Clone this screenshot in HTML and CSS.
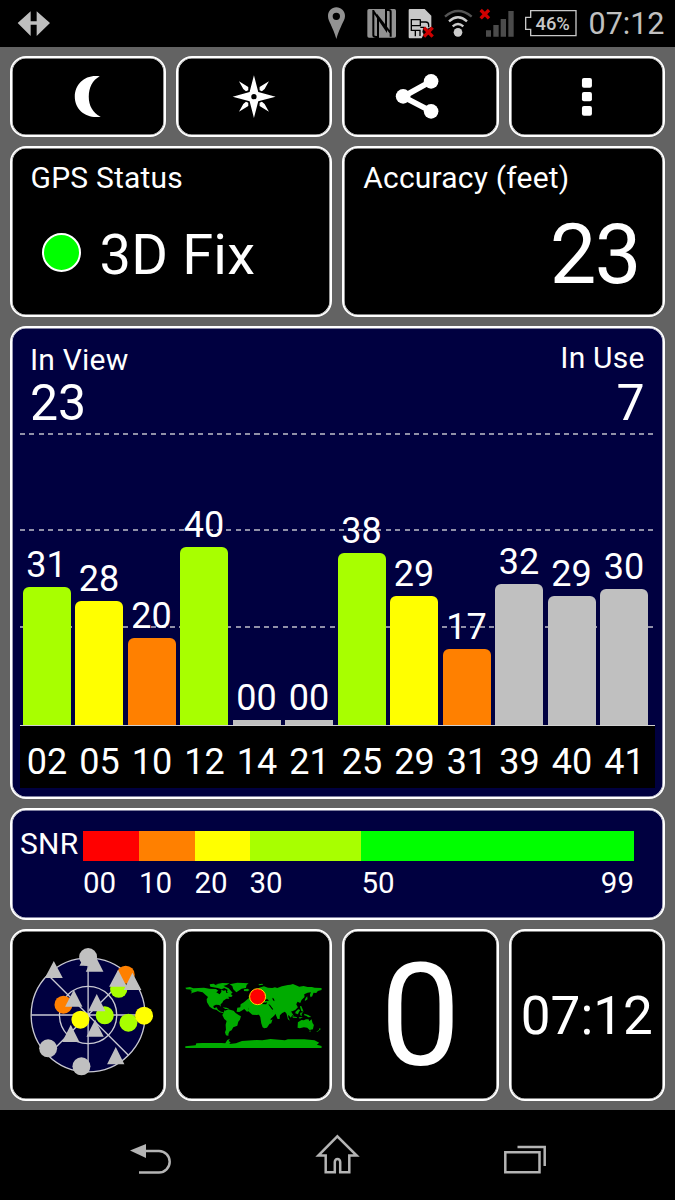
FILE: index.html
```html
<!DOCTYPE html>
<html lang="en">
<head>
<meta charset="utf-8">
<title>GPS Test</title>
<link rel="stylesheet" href="styles.css">
</head>
<body>
<header class="statusbar">
  <svg class="usb" viewBox="45 0 120 141"><path d="M53 69 92 34v30h18V34l40 35-40 39V74H92v34z"/></svg>
  <div class="tray">
    <svg class="pin" viewBox="0 0 120 141"><path fill="#929292" fill-rule="evenodd" d="M49 22c-14 0-25 11-25 26 0 9 4 17 8 25 6 14 12 26 17 44 5-18 11-30 17-44 4-8 9-16 9-25 0-15-12-26-26-26zm0 16a11 11 0 1 1 0 22 11 11 0 0 1 0-22z"/></svg>
    <svg class="nfc" viewBox="120 0 126 141"><rect x="142" y="27" width="86" height="86" rx="5" fill="#929292"/><path fill="none" stroke="#000" stroke-width="6" d="M160 30v76q0 5 9 5h5V50l37 48M160 33l38 56V30h8q6 0 6 5v75"/></svg>
    <svg class="sim" viewBox="246 0 111 141"><path fill="#c8c8c8" d="M269 27h45l20 20v34l-12 5-12-4-3 14 4 7-6 12h-36q-3 0-3-4V31q0-4 3-4z"/><path class="simlines" d="M302 59h-28v18h27V59M274 77v14h26v17M286 91v18M301 66h16q9 0 9 9v7M301 82h13"/><path class="cross" d="m312 83 26 27m0-27-26 27"/></svg>
    <svg class="wifi" viewBox="357 0 108 141"><circle cx="414" cy="97" r="13" fill="#ccc"/><g fill="none" stroke-width="7"><path stroke="#ccc" d="M398 79q16-14 32 0M387 64q27-24 54 0"/><path stroke="#555" d="M375 50q39-34 80 0"/></g></svg>
    <svg class="signal" viewBox="465 0 135 141"><path fill="#4b4b4b" d="M498 91h15v19h-15zM520 75h16v35h-16zM542 57h16v53h-16zM565 33h16v77h-16z"/><path class="cross" d="m482 30 25 25m0-25-25 25"/></svg>
    <svg class="battery" viewBox="600 0 189 141"><path fill="none" stroke="#c8c8c8" stroke-width="4" d="M632 32h136v75H632V88h-15V52h15z"/><text x="698" y="89" text-anchor="middle">46%</text></svg>
    <span class="clock">07:12</span>
  </div>
</header>

<main class="dash">
  <button class="card"><svg viewBox="37.5 177 451.5 225"><path d="M298 229c-43-7-75 23-75 61 0 40 36 67 78 60-24-11-36-34-36-60 0-27 11-49 33-61z"/></svg></button>
  <button class="card"><svg viewBox="537 177 451.5 225"><path fill-rule="evenodd" d="m762 226 13 50 52 14-52 14-13 50-13-50-51-14 51-14zm0 56a8 8 0 1 0 0 16 8 8 0 0 0 0-16zM717 244l28 17 0 10-7 3-8-7zM807 244l-28 17 0 10 7 3 8-7zM717 335l28-17 0-10-7-3-8 7zM807 335l-28-17 0-10 7-3 8 7z"/></svg></button>
  <button class="card"><svg viewBox="76.5 177 451.5 225"><path fill="none" stroke="#fff" stroke-width="17" d="m335 244-84 46 84 44"/><circle cx="335" cy="244" r="22"/><circle cx="251" cy="289" r="22"/><circle cx="335" cy="334" r="22"/></svg></button>
  <button class="card"><svg viewBox="576 177 451.5 225"><rect x="786" y="234" width="30" height="29" rx="6"/><rect x="786" y="276" width="30" height="28" rx="6"/><rect x="786" y="318" width="30" height="29" rx="6"/></svg></button>

  <section class="card half status">
    <h2>GPS Status</h2>
    <div class="fix"><i class="dot"></i><span>3D Fix</span></div>
  </section>
  <section class="card half accuracy">
    <h2>Accuracy (feet)</h2>
    <div class="feet">23</div>
  </section>

  <section class="card full navy chart">
    <div class="counts">
      <div class="view"><h2>In View</h2><b>23</b></div>
      <div class="use"><h2>In Use</h2><b>7</b></div>
    </div>
    <div class="plot">
      <div class="col"><span>31</span><i class="bar lime" style="height:138px"></i></div>
      <div class="col"><span>28</span><i class="bar yellow" style="height:124px"></i></div>
      <div class="col"><span>20</span><i class="bar orange" style="height:87.5px"></i></div>
      <div class="col"><span>40</span><i class="bar lime" style="height:178.5px"></i></div>
      <div class="col"><span>00</span><i class="bar flat" style="height:5px"></i></div>
      <div class="col"><span>00</span><i class="bar flat" style="height:5px"></i></div>
      <div class="col"><span>38</span><i class="bar lime" style="height:172px"></i></div>
      <div class="col"><span>29</span><i class="bar yellow" style="height:129.5px"></i></div>
      <div class="col"><span>17</span><i class="bar orange" style="height:76px"></i></div>
      <div class="col"><span>32</span><i class="bar" style="height:141px"></i></div>
      <div class="col"><span>29</span><i class="bar" style="height:129.5px"></i></div>
      <div class="col"><span>30</span><i class="bar" style="height:136px"></i></div>
    </div>
    <div class="ids"><span>02</span><span>05</span><span>10</span><span>12</span><span>14</span><span>21</span><span>25</span><span>29</span><span>31</span><span>39</span><span>40</span><span>41</span></div>
  </section>

  <section class="card full navy snr">
    <h2>SNR</h2>
    <div class="scale">
      <div class="band"><i class="red"></i><i class="orange"></i><i class="yellow"></i><i class="lime"></i><i class="green"></i></div>
      <div class="ticks"><span>00</span><span>10</span><span>20</span><span>30</span><span>50</span><span>99</span></div>
    </div>
  </section>

  <section class="card">
    <svg viewBox="7.5 6 451.5 498">
      <g stroke="#c8c8d2" stroke-width="4">
        <circle cx="233" cy="255" r="171" fill="#000040"/>
        <circle cx="233" cy="255" r="86" fill="none"/>
        <path d="M62 255h342M233 84v342M112 134l242 242M112 376l242-242"/>
      </g>
      <g fill="#c0c0c0">
        <path d="m130 93 27 51h-54zM233 60l25 47h-51zM252 72l27 53h-53z"/>
        <circle cx="233" cy="81" r="27"/>
        <circle cx="325" cy="177" r="26" fill="#a8ff00"/>
        <circle cx="346" cy="134" r="27" fill="#ff8000"/>
        <path d="m323 119 26 51h-53zM366 128l27 52h-53z"/>
        <circle cx="159" cy="224" r="27" fill="#ff8000"/>
        <path d="m190 179 26 51h-52z"/>
        <circle cx="283" cy="256" r="27" fill="#a8ff00"/>
        <path d="m259 192 26 52h-52z"/>
        <circle cx="210" cy="269" r="27" fill="#ff0"/>
        <circle cx="354" cy="278" r="27" fill="#a8ff00"/>
        <circle cx="401" cy="257" r="27" fill="#ff0"/>
        <path d="m254 269 26 51h-52zM181 284l26 52h-52zM316 351l26 52h-52z"/>
        <circle cx="113" cy="355" r="27"/>
        <circle cx="213" cy="409" r="27"/>
      </g>
    </svg>
  </section>

  <section class="card">
    <svg viewBox="9 -114 451.5 498">
      <g fill="#00ab00">
        <path d="M28 53 42 51 52 55 84 53 100 56 120 57 127 62 121 67 131 73 136 66 136 59 143 62 150 61 151 69 159 67 170 77 166 81 157 80 160 86 151 86 142 92 139 98 134 103 134 110 130 105 120 104 112 108 114 115 122 112 126 119 135 125 144 127 141 129 131 127 122 120 111 117 101 110 93 97 92 88 96 81 89 75 80 67 65 64 48 69 44 71 48 65 43 62 50 59 31 58z"/>
        <path d="m101 43 12-2 7 5 15-3 8 5 15 7 12 13-7 5-10-8 2-6-10-5-8 4-12-4-22-4zM119 43l20-4 22 1-9 5-13 4z"/>
        <path d="m161 43 23-5 34 2-6 5-2 9-13 2-10 7-6 4-9-9-3-10zM204 58l11-2 6 4-6 4-11-1zM248 43l11-2 3 3-13 2zM140 112l12 1 8 4-12 0z"/>
        <path d="m147 122 10-4 16 4 6 7 9 6 7 4-3 10-5 6-3 12-12 5-5 9-6 3-3 6-1 7 5 2-12-3-3-9 3-8-1-15 3-11-7-6-6-12 5-8 1-7z"/>
        <path d="m241 65 9-12 14-4 12 4 13 1 8-2 7 2 14-5 18-4 8-1 7-2 9 4 10 4 13-2 12 3 13 0 8 2 21 1v6l-11 3-5 6-8-1-4 11-5 3-2-8 3-7-10 1-10 5 1 8-9 9-4 9-8-4-4 8 5 9-8 8-9 4-6 1 6 10-4 8-8-9 0 8 5 10-6-4-4-17-5-6-8 4-7 7-1 11-6 0-6-14-8-8-10-1-8-4 2 5 9 2-5 7-11 6-8 4-8-14-1-9-10 2-5-5-1 6-8-5-8-6-2 4 4 6-8 2-8-8-8 5-7 4-8-1 2-12 9-1 1-9 10-6z"/>
        <path d="m223 100 17-4 9 1 3 6 16 3 9-1 5 8 7 11 14-2-7 14-12 11 1 9-7 10-5 7-8 2-5-3-4-12-3-19-4-7-8 1-12-1-10-9-2-8 3-10z"/>
        <path d="m290 148-4 12-5 2-1-8 6-4zM224 73l6-5 2 6 6 7-9 3-5-2 4-3zM218 78l4-3v7h-4zM390 83l4-4 1 9-8 5 0-4z"/>
        <path d="m341 120 5 5 8 13-5-2-6-8zM349 139l13 2 2 3-13-1zM359 125l8-7 6 2-4 6-3 7-8-3zM373 128l9-1-5 5 1 6-5-2zM372 109l4-1 4 9 3 8-7-2zM385 131l12 4 9 6-9 1-5-4-7-2zM368 142l13-1-9 5z"/>
        <path d="m366 157 11-7 7 1 6-3 8 0 2 6 7-6 3 11 4 6-3 13-10 2-7-7-10-1-13 3-6-2zM400 182l6 0-4 4zM431 174l4 3-10 8-4 1 8-6z"/>
        <path d="M28 229 59 226 61 220 80 219 103 219 137 219 148 220 154 210 162 206 158 213 164 217 160 222 180 220 198 213 242 210 259 211 284 207 310 209 327 211 336 208 385 208 416 211 430 218 423 224 437 228V234H28z"/>
      </g>
      <g fill="#000"><path d="m231 95 14-4 8 3 5 3 12 1 4-3-3 8-17-1-9-2-2-5zM263 88l12 0 4 4-10 1zM289 83l5 3 2 8-5-3zM277 103l5 1 10 14-3 1z"/></g>
      <circle cx="245" cy="80" r="24" fill="red" stroke="#ffd800" stroke-width="3"/>
    </svg>
  </section>

  <section class="card number">0</section>
  <section class="card time">07:12</section>
</main>

<nav class="navbar">
  <svg viewBox="0 0 675 90">
    <path fill="#b4b4b4" d="M130 40.500 146 34v14z"/>
    <g fill="none" stroke="#b4b4b4" stroke-width="2.500">
      <path d="M145 41h14a10.700 10.700 0 0 1 0 21.400h-20"/>
      <path d="m337.300 26.300-19 19.200h7.400v16.800h9.100V52a2.600 3 0 0 1 5.400 0v10.300h9.100V45.500h7.400z"/>
      <path d="M505.300 42.300h34.200v20h-34.200zM517.500 37h27.200v19"/>
    </g>
  </svg>
</nav>
</body>
</html>
```
FILE: styles.css
```css
* { box-sizing: border-box; }
body { margin: 0; width: 675px; height: 1200px; background: #000; color: #fff; font-family: Roboto, "Liberation Sans", sans-serif; overflow: hidden; }
svg { display: block; }
h2, b { margin: 0; font-weight: 400; }
h2 { font-size: 30px; line-height: 36px; letter-spacing: .2px; }
i { display: block; }

.statusbar { height: 47px; display: flex; justify-content: space-between; padding-left: 15px; }
.statusbar svg { height: 47px; }
.usb { width: 40px; fill: #bebebe; }
.tray { display: flex; width: 355px; }
.pin { width: 40px; }
.nfc { width: 42px; }
.sim { width: 37px; }
.wifi { width: 36px; }
.signal { width: 45px; }
.battery { width: 63px; }
.battery text { font-size: 55px; font-weight: 500; fill: #c8c8c8; }
.simlines { fill: none; stroke: #000; stroke-width: 4; }
.cross { fill: none; stroke: #cf0000; stroke-width: 10; }
.clock { padding-left: 5.5px; font-size: 30.5px; line-height: 48px; color: #c0c0c0; }

.dash { height: 1063px; padding: 9px 10px 9px 9.5px; background: #636363; display: grid; grid-template-columns: repeat(4, 1fr); grid-template-rows: 81px 171px 473px 112px 172px; gap: 9px 10px; }
.card { min-width: 0; padding: 1px; border: 2px solid #fff; border-radius: 16px; background: #000; color: #fff; overflow: hidden; box-shadow: inset 0 0 0 .6px #fff; }
.card > svg { width: 100%; height: 100%; fill: #fff; }
.half { grid-column: span 2; }
.full { grid-column: span 4; }
.navy { background: #000040; }

.status, .accuracy { padding: 12px 19px; }
.fix { display: flex; align-items: center; gap: 18.5px; padding: 26px 0 0 11.5px; font-size: 56px; line-height: 66px; letter-spacing: .2px; }
.dot { width: 39px; height: 39px; border: 2px solid #fff; border-radius: 50%; background: #0f0; margin-top: -6px; }
.feet { text-align: right; font-size: 83px; line-height: 98px; letter-spacing: -1.5px; padding: 10px 4px 0 0; }

.chart { padding: 0 8px 0 8.5px; }
.counts { height: 105px; display: flex; justify-content: space-between; padding: 14px 10.5px 0 10px; }
.counts b { display: block; font-size: 50px; line-height: 50px; }
.use { text-align: right; margin-top: -2px; }
.use b { margin-top: 2px; }
.plot { --dash: repeating-linear-gradient(90deg, #9090a8 0 5px, transparent 5px 9.38px); height: 292px; padding: 0 6px 0 2.5px; display: grid; grid-template-columns: repeat(12, 48px); column-gap: 4.5px; align-items: end; background: var(--dash) 0 -1px / 633px 2px no-repeat, var(--dash) 0 96px / 633px 2px no-repeat, var(--dash) 0 193px / 633px 2px no-repeat; }
.plot { background-position: 0 0, 0 96px, 0 193px; }
.col { text-align: center; font-size: 36px; line-height: 42px; }
.col span { display: block; margin-bottom: 1px; }
.bar { background: #c0c0c0; border-radius: 6px 6px 0 0; }
.bar.flat { border-radius: 0; }
.ids { height: 63px; border-top: 1px solid #d0d0d0; background: #000; display: grid; grid-template-columns: repeat(12, 48px); column-gap: 4.5px; padding-left: 3px; font-size: 36px; line-height: 73px; text-align: center; }
.red { background: red; }
.orange { background: #ff8000; }
.yellow { background: #ff0; }
.lime { background: #a8ff00; }
.green { background: #0f0; }

.snr { display: flex; padding: 16px 29px 0 8.5px; }
.snr h2 { width: 63px; letter-spacing: .3px; }
.scale { flex: 1; padding-top: 5px; }
.band, .ticks { display: grid; grid-template-columns: 56px 55.5px 55px 111px 1fr; }
.band { height: 30px; }
.ticks { grid-template-columns: 56px 55.5px 55px 112px 1fr 1fr; font-size: 29.5px; line-height: 34px; padding-top: 5px; }
.ticks span:last-child { text-align: right; }
.number { font-size: 143px; line-height: 169px; text-align: center; }
.time { font-size: 53px; line-height: 168px; text-align: center; }
.navbar svg { width: 675px; height: 90px; }
```
